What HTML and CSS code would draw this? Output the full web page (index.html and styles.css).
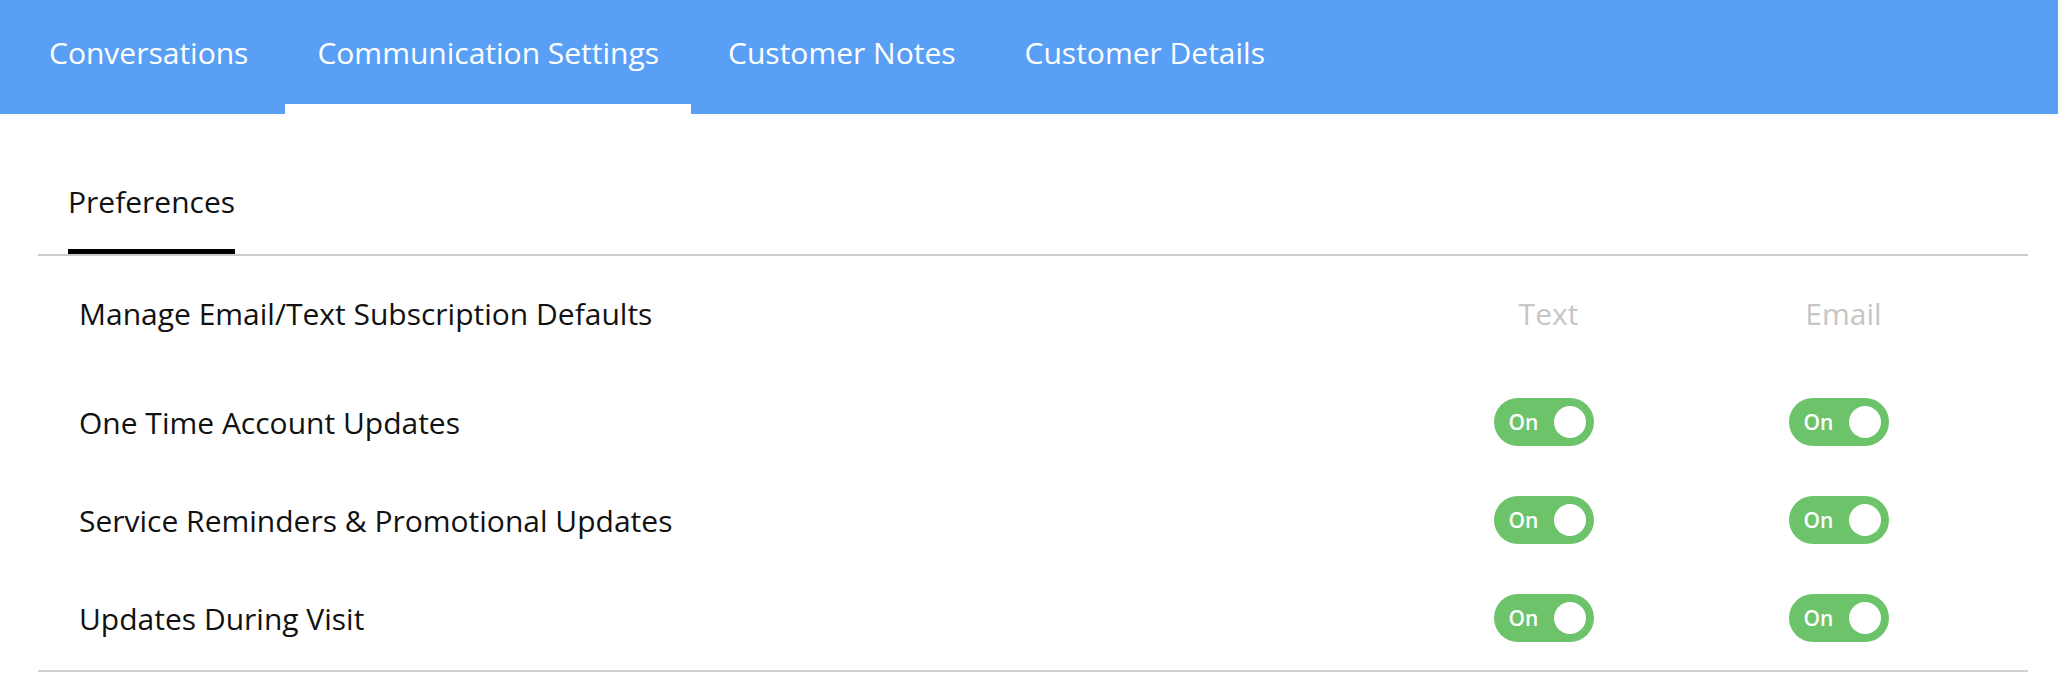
FILE: index.html
```html
<!DOCTYPE html>
<html lang="en">
<head>
    <meta charset="UTF-8">
    <meta name="viewport" content="width=device-width, initial-scale=1.0">
    <title>Communication Settings</title>
    <link rel="stylesheet" href="styles.css">
</head>
<body>

    <nav class="top-nav">
        <a class="top-tab" href="#">Conversations</a>
        <a class="top-tab active" href="#">Communication Settings</a>
        <a class="top-tab" href="#">Customer Notes</a>
        <a class="top-tab" href="#">Customer Details</a>
    </nav>

    <main class="content">
        <div class="sub-tabs">
            <span class="sub-tab active">Preferences</span>
        </div>

        <div class="pref-list">
            <div class="pref-row pref-head">
                <span class="pref-label">Manage Email/Text Subscription Defaults</span>
                <span class="col-head">Text</span>
                <span class="col-head">Email</span>
            </div>

            <div class="pref-row">
                <span class="pref-label">One Time Account Updates</span>
                <span class="cell"><span class="toggle"><span class="toggle-text">On</span><span class="knob"></span></span></span>
                <span class="cell"><span class="toggle"><span class="toggle-text">On</span><span class="knob"></span></span></span>
            </div>

            <div class="pref-row">
                <span class="pref-label">Service Reminders &amp; Promotional Updates</span>
                <span class="cell"><span class="toggle"><span class="toggle-text">On</span><span class="knob"></span></span></span>
                <span class="cell"><span class="toggle"><span class="toggle-text">On</span><span class="knob"></span></span></span>
            </div>

            <div class="pref-row">
                <span class="pref-label">Updates During Visit</span>
                <span class="cell"><span class="toggle"><span class="toggle-text">On</span><span class="knob"></span></span></span>
                <span class="cell"><span class="toggle"><span class="toggle-text">On</span><span class="knob"></span></span></span>
            </div>
        </div>
    </main>

</body>
</html>
```

FILE: styles.css
```css
body {
    margin: 0;
    font-family: "Open Sans", Arial, sans-serif;
    color: #111;
    background: #fff;
}

/* top navigation */
.top-nav {
    display: flex;
    gap: 5px;
    height: 114px;
    padding-left: 17px;
    background: #5a9ff6;
}
.top-tab {
    display: flex;
    align-items: center;
    padding: 0 32px;
    border-bottom: 10px solid transparent;
    box-sizing: border-box;
    height: 114px;
    color: #fff;
    font-size: 30px;
    text-decoration: none;
}
.top-tab.active {
    border-bottom-color: #fff;
}

/* content */
.content {
    margin: 0 30px 0 38px;
}
.sub-tabs {
    display: flex;
    padding-left: 30px;
    border-bottom: 2px solid #cbcbcb;
}
.sub-tab {
    padding: 68px 0 27px;
    font-size: 30px;
    line-height: 40px;
    border-bottom: 5px solid #000;
}

.pref-list {
    padding: 8px 0 3px;
    border-bottom: 2px solid #d2d2d2;
}
.pref-row {
    display: grid;
    grid-template-columns: 1fr 295px 295px;
    align-items: center;
    height: 98px;
    padding: 0 42px 0 41px;
    font-size: 30px;
}
.pref-head {
    margin-bottom: 11px;
}
.col-head {
    padding-left: 10px;
    text-align: center;
    color: #c6c6c6;
}
.cell {
    display: flex;
    justify-content: center;
}

.toggle {
    display: flex;
    align-items: center;
    justify-content: space-between;
    width: 100px;
    height: 48px;
    padding: 0 8px 0 15px;
    box-sizing: border-box;
    border-radius: 24px;
    background: #6cc36a;
    cursor: pointer;
}
.toggle-text {
    color: #fff;
    font-size: 21px;
    font-weight: 600;
}
.knob {
    width: 32px;
    height: 32px;
    border-radius: 50%;
    background: #fff;
}
```
